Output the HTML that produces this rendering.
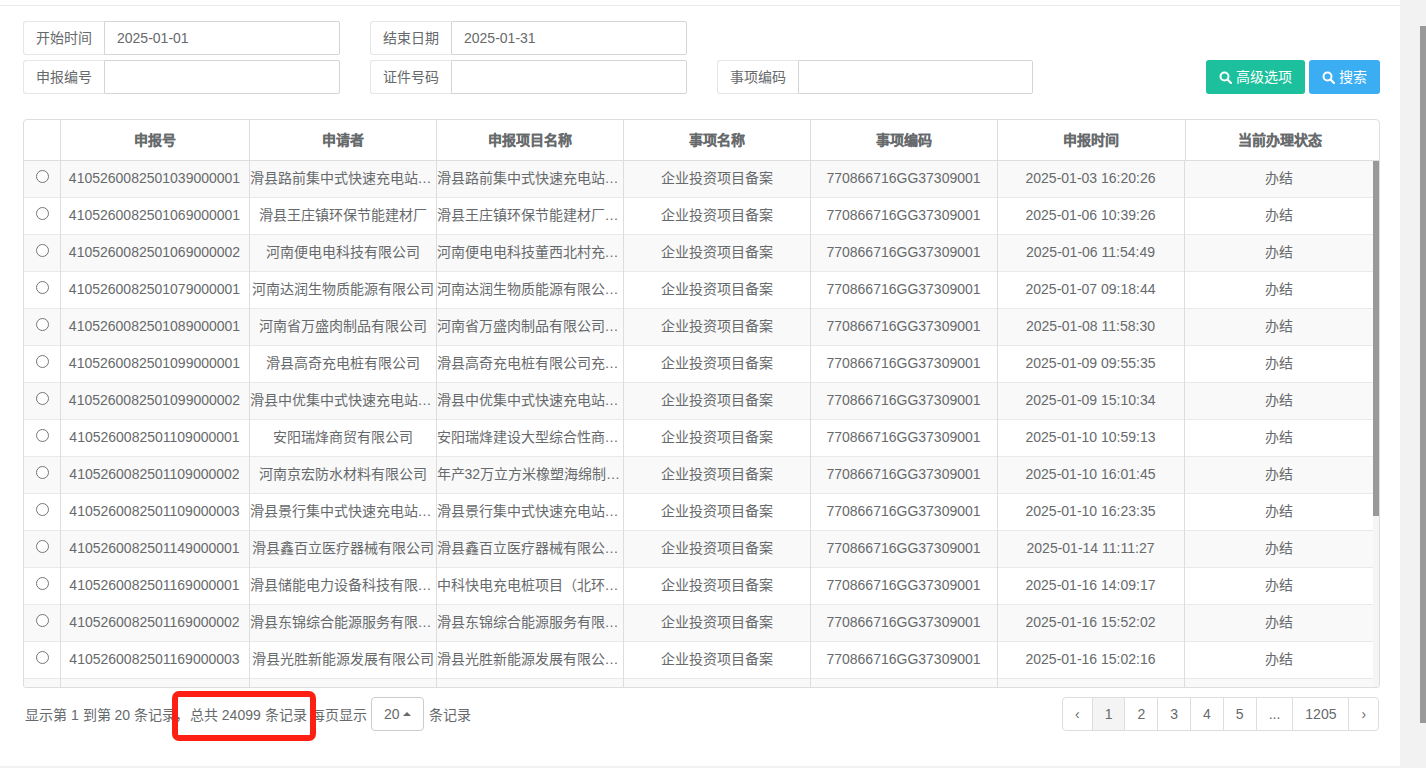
<!DOCTYPE html>
<html lang="zh-CN"><head><meta charset="utf-8">
<style>
*{box-sizing:border-box}
html,body{margin:0;padding:0;width:1426px;height:768px;overflow:hidden;background:#f2f2f2}
body{font-family:"Liberation Sans",sans-serif;font-size:14px;color:#676a6c;position:relative}
.page{position:absolute;left:0;top:0;width:1400px;height:766px;background:#fff}
.topline{position:absolute;left:0;top:5px;width:1400px;height:1px;background:#e7eaec}
.vthumb{position:absolute;left:1420px;top:26px;width:6px;height:697px;background:#999}
.ig{position:absolute;height:34px;display:flex}
.ig .addon{border:1px solid #e5e6e7;border-right:none;border-radius:3px 0 0 3px;width:81px;height:34px;line-height:32px;text-align:center;color:#676a6c;background:#fff}
.ig .inp{border:1px solid #d4d5d8;border-radius:0 2px 2px 0;height:34px;line-height:32px;padding-left:12px;color:#676a6c;flex:1}
.btn{position:absolute;top:60px;height:34px;line-height:32px;color:#fff;border-radius:3px;font-size:14px;text-align:left}
.btn svg{position:absolute;top:11px}
.tbl{position:absolute;left:23px;top:119px;width:1357px;height:569px;border:1px solid #ddd;border-radius:4px 4px 3px 3px;overflow:hidden}
table{border-collapse:collapse;table-layout:fixed;position:absolute}
th{height:40px;font-weight:bold;-webkit-text-stroke:0.15px #676a6c;text-align:center;border-left:1px solid #ddd;padding:0 0 2px 0;white-space:nowrap;overflow:hidden}
td{height:37px;text-align:center;border-left:1px solid #ddd;border-top:1px solid #e7eaec;padding:0 0 2px 0;white-space:nowrap;overflow:hidden;text-overflow:ellipsis}
th:first-child,td:first-child{border-left:none}
td.cj{padding-bottom:4px}
tbody tr:nth-child(odd) td{background:#f9f9f9}
.radio{display:inline-block;width:13px;height:13px;border:1px solid #767676;border-radius:50%;vertical-align:middle;background:#fff;position:relative;top:-3px;left:1px}
.hdr{left:0;top:0}
.body{left:0;top:40px;border-top:1px solid #ddd}
.sbtrack{position:absolute;left:1349px;top:41px;width:6px;height:527px;background:#f5f5f5}
.sbthumb{position:absolute;left:1349px;top:41px;width:6px;height:355px;background:#999}
.info{position:absolute;top:698px;height:34px;line-height:34px;white-space:nowrap}
.psize{position:absolute;left:371px;top:697px;width:53px;height:34px;border:1px solid #ccc;border-radius:4px;line-height:32px}
.pag{position:absolute;top:697px;height:34px;display:flex}
.pag span{display:block;height:34px;line-height:32px;border:1px solid #ddd;margin-left:-1px;padding:0 12px;background:#fff}
.pag span.act{background:#f4f4f4}
.redbox{position:absolute;left:172px;top:691px;width:144px;height:50px;border:6px solid #fe1f14;border-radius:7px}
</style></head><body>
<div class="page">
<div class="topline"></div>

<div class="ig" style="left:23px;top:21px;width:317px"><div class="addon">开始时间</div><div class="inp">2025-01-01</div></div>
<div class="ig" style="left:370px;top:21px;width:317px"><div class="addon">结束日期</div><div class="inp">2025-01-31</div></div>
<div class="ig" style="left:23px;top:60px;width:317px"><div class="addon">申报编号</div><div class="inp"></div></div>
<div class="ig" style="left:370px;top:60px;width:317px"><div class="addon">证件号码</div><div class="inp"></div></div>
<div class="ig" style="left:717px;top:60px;width:316px"><div class="addon">事项编码</div><div class="inp"></div></div>

<div class="btn" style="left:1206px;width:99px;background:#1cc09c"><svg style="left:13px" width="13" height="13" viewBox="0 0 13 13"><circle cx="5.5" cy="5.5" r="4" fill="none" stroke="#fff" stroke-width="2"/><path d="M8.5 8.5L12 12" stroke="#fff" stroke-width="2.2" stroke-linecap="round"/></svg><span style="position:absolute;left:30px;top:1px">高级选项</span></div>
<div class="btn" style="left:1309px;width:71px;background:#3badf2"><svg style="left:13px" width="13" height="13" viewBox="0 0 13 13"><circle cx="5.5" cy="5.5" r="4" fill="none" stroke="#fff" stroke-width="2"/><path d="M8.5 8.5L12 12" stroke="#fff" stroke-width="2.2" stroke-linecap="round"/></svg><span style="position:absolute;left:30px;top:1px">搜索</span></div>

<div class="tbl">
<table class="hdr" style="width:1355px">
<colgroup><col style="width:36px"><col style="width:189px"><col style="width:187px"><col style="width:187px"><col style="width:187px"><col style="width:187px"><col style="width:188px"><col style="width:194px"></colgroup>
<thead><tr><th></th><th>申报号</th><th>申请者</th><th>申报项目名称</th><th>事项名称</th><th>事项编码</th><th>申报时间</th><th style="padding-right:5px">当前办理状态</th></tr></thead>
</table>
<div style="position:absolute;left:0;top:40px;width:1355px;height:527px;overflow:hidden;border-top:1px solid #ddd">
<table style="width:1349px;left:0;top:-1px">
<colgroup><col style="width:36px"><col style="width:189px"><col style="width:187px"><col style="width:187px"><col style="width:187px"><col style="width:187px"><col style="width:187px"><col style="width:189px"></colgroup>
<tbody>
<tr><td class="c0"><span class="radio"></span></td><td>4105260082501039000001</td><td class="cj">滑县路前集中式快速充电站有限公司</td><td class="cj">滑县路前集中式快速充电站项目建设</td><td class="cj">企业投资项目备案</td><td>770866716GG37309001</td><td>2025-01-03 16:20:26</td><td class="cj">办结</td></tr>
<tr><td class="c0"><span class="radio"></span></td><td>4105260082501069000001</td><td class="cj">滑县王庄镇环保节能建材厂</td><td class="cj">滑县王庄镇环保节能建材厂项目</td><td class="cj">企业投资项目备案</td><td>770866716GG37309001</td><td>2025-01-06 10:39:26</td><td class="cj">办结</td></tr>
<tr><td class="c0"><span class="radio"></span></td><td>4105260082501069000002</td><td class="cj">河南便电电科技有限公司</td><td class="cj">河南便电电科技董西北村充电站项目</td><td class="cj">企业投资项目备案</td><td>770866716GG37309001</td><td>2025-01-06 11:54:49</td><td class="cj">办结</td></tr>
<tr><td class="c0"><span class="radio"></span></td><td>4105260082501079000001</td><td class="cj">河南达润生物质能源有限公司</td><td class="cj">河南达润生物质能源有限公司项目</td><td class="cj">企业投资项目备案</td><td>770866716GG37309001</td><td>2025-01-07 09:18:44</td><td class="cj">办结</td></tr>
<tr><td class="c0"><span class="radio"></span></td><td>4105260082501089000001</td><td class="cj">河南省万盛肉制品有限公司</td><td class="cj">河南省万盛肉制品有限公司项目</td><td class="cj">企业投资项目备案</td><td>770866716GG37309001</td><td>2025-01-08 11:58:30</td><td class="cj">办结</td></tr>
<tr><td class="c0"><span class="radio"></span></td><td>4105260082501099000001</td><td class="cj">滑县高奇充电桩有限公司</td><td class="cj">滑县高奇充电桩有限公司充电站项目</td><td class="cj">企业投资项目备案</td><td>770866716GG37309001</td><td>2025-01-09 09:55:35</td><td class="cj">办结</td></tr>
<tr><td class="c0"><span class="radio"></span></td><td>4105260082501099000002</td><td class="cj">滑县中优集中式快速充电站有限公司</td><td class="cj">滑县中优集中式快速充电站项目</td><td class="cj">企业投资项目备案</td><td>770866716GG37309001</td><td>2025-01-09 15:10:34</td><td class="cj">办结</td></tr>
<tr><td class="c0"><span class="radio"></span></td><td>4105260082501109000001</td><td class="cj">安阳瑞烽商贸有限公司</td><td class="cj">安阳瑞烽建设大型综合性商贸项目</td><td class="cj">企业投资项目备案</td><td>770866716GG37309001</td><td>2025-01-10 10:59:13</td><td class="cj">办结</td></tr>
<tr><td class="c0"><span class="radio"></span></td><td>4105260082501109000002</td><td class="cj">河南京宏防水材料有限公司</td><td class="cj">年产32万立方米橡塑海绵制品项目</td><td class="cj">企业投资项目备案</td><td>770866716GG37309001</td><td>2025-01-10 16:01:45</td><td class="cj">办结</td></tr>
<tr><td class="c0"><span class="radio"></span></td><td>4105260082501109000003</td><td class="cj">滑县景行集中式快速充电站有限公司</td><td class="cj">滑县景行集中式快速充电站项目</td><td class="cj">企业投资项目备案</td><td>770866716GG37309001</td><td>2025-01-10 16:23:35</td><td class="cj">办结</td></tr>
<tr><td class="c0"><span class="radio"></span></td><td>4105260082501149000001</td><td class="cj">滑县鑫百立医疗器械有限公司</td><td class="cj">滑县鑫百立医疗器械有限公司项目</td><td class="cj">企业投资项目备案</td><td>770866716GG37309001</td><td>2025-01-14 11:11:27</td><td class="cj">办结</td></tr>
<tr><td class="c0"><span class="radio"></span></td><td>4105260082501169000001</td><td class="cj">滑县储能电力设备科技有限公司</td><td class="cj">中科快电充电桩项目（北环路）</td><td class="cj">企业投资项目备案</td><td>770866716GG37309001</td><td>2025-01-16 14:09:17</td><td class="cj">办结</td></tr>
<tr><td class="c0"><span class="radio"></span></td><td>4105260082501169000002</td><td class="cj">滑县东锦综合能源服务有限公司</td><td class="cj">滑县东锦综合能源服务有限公司项目</td><td class="cj">企业投资项目备案</td><td>770866716GG37309001</td><td>2025-01-16 15:52:02</td><td class="cj">办结</td></tr>
<tr><td class="c0"><span class="radio"></span></td><td>4105260082501169000003</td><td class="cj">滑县光胜新能源发展有限公司</td><td class="cj">滑县光胜新能源发展有限公司项目</td><td class="cj">企业投资项目备案</td><td>770866716GG37309001</td><td>2025-01-16 15:02:16</td><td class="cj">办结</td></tr>
<tr><td class="c0"><span class="radio"></span></td><td>4105260082501179000001</td><td class="cj">滑县某某有限公司</td><td class="cj">滑县某某项目</td><td class="cj">企业投资项目备案</td><td>770866716GG37309001</td><td>2025-01-17 10:00:00</td><td class="cj">办结</td></tr>
</tbody></table>
</div>
<div class="sbtrack"></div><div class="sbthumb"></div>
</div>

<div class="info" style="left:25px">显示第 1 到第 20 条记录<span style="position:relative;left:-1px">，</span>总共 24099 条记录</div>
<div class="info" style="left:311px">每页显示</div>
<div class="psize"><span style="position:absolute;left:12px">20</span><span style="position:absolute;left:31px;top:14px;width:0;height:0;border-left:4px solid transparent;border-right:4px solid transparent;border-bottom:4px solid #676a6c"></span></div>
<div class="info" style="left:429px">条记录</div>

<div class="pag" style="left:1063px"><span style="border-radius:4px 0 0 4px">‹</span><span class="act">1</span><span>2</span><span>3</span><span>4</span><span>5</span><span>...</span><span>1205</span><span style="border-radius:0 4px 4px 0">›</span></div>

<div class="redbox"></div>
</div>
<div class="vthumb"></div>
</body></html>
